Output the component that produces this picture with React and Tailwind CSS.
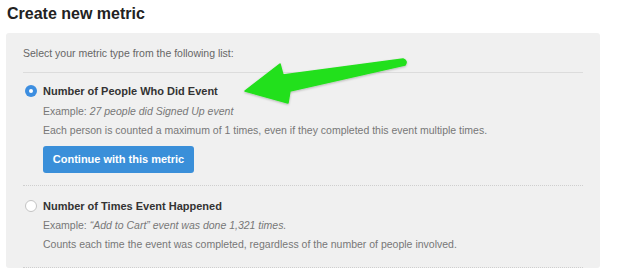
export default function App() {
  const font = { fontFamily: '"Liberation Sans", Arial, sans-serif' };

  return (
    <div className="relative w-[620px] h-[273px] overflow-hidden bg-white pl-[6px]" style={font}>
      <h1 className="pl-[1px] pt-[5px] text-[16px] leading-[18px] font-bold text-[#222]">Create new metric</h1>

      <div className="mt-[10px] w-[594px] rounded-[3px] bg-[#f0f0f0] px-[17px] pt-[13px]">
        <div className="border-b border-[#dcdcdc] pb-[12px] text-[10.5px] leading-[14px] text-[#666]">
          Select your metric type from the following list:
        </div>

        {/* option 1 - selected */}
        <div className="border-b border-dotted border-[#cfcfcf] pt-[11px] pb-[12px]">
          <div className="flex items-center gap-[6px] pl-[2px]">
            <span className="flex h-[12px] w-[12px] items-center justify-center rounded-full bg-[#3d8ee0]">
              <span className="h-[4px] w-[4px] rounded-full bg-white" />
            </span>
            <span className="text-[11px] leading-[14px] font-bold text-[#333]">Number of People Who Did Event</span>
          </div>
          <div className="ml-[20px]">
            <p className="mt-[6px] text-[10.5px] leading-[14px] text-[#777]">
              Example: <i>27 people did Signed Up event</i>
            </p>
            <p className="mt-[5px] text-[10.5px] leading-[14px] text-[#777]">
              Each person is counted a maximum of 1 times, even if they completed this event multiple times.
            </p>
            <button className="mt-[9px] h-[27px] w-[151px] rounded-[3px] bg-[#3a8fd9] text-[11px] font-bold text-white">
              Continue with this metric
            </button>
          </div>
        </div>

        {/* option 2 */}
        <div className="border-b border-dotted border-[#cfcfcf] pt-[13px] pb-[16px]">
          <div className="flex items-center gap-[6px] pl-[2px]">
            <span className="h-[12px] w-[12px] rounded-full border border-[#c4c4c4] bg-white" />
            <span className="text-[11px] leading-[14px] font-bold text-[#333]">Number of Times Event Happened</span>
          </div>
          <div className="ml-[20px]">
            <p className="mt-[5px] text-[10.5px] leading-[14px] text-[#777]">
              Example: <i>“Add to Cart” event was done 1,321 times.</i>
            </p>
            <p className="mt-[5px] text-[10.5px] leading-[14px] text-[#777]">
              Counts each time the event was completed, regardless of the number of people involved.
            </p>
          </div>
        </div>
      </div>

      {/* green annotation arrow */}
      <svg className="absolute left-0 top-0" width="620" height="273" viewBox="0 0 620 273">
        <defs>
          <filter id="sh" x="-10%" y="-10%" width="120%" height="130%">
            <feDropShadow dx="0" dy="1" stdDeviation="1" floodColor="#000" floodOpacity="0.25" />
          </filter>
        </defs>
        <path
          d="M245 91 L280 64 L283 75 L403 59 Q408 61 405 65 L290 91 L288 103 Z"
          fill="#22e01b"
          stroke="#22e01b"
          strokeWidth="1.5"
          strokeLinejoin="round"
          filter="url(#sh)"
        />
      </svg>
    </div>
  );
}
